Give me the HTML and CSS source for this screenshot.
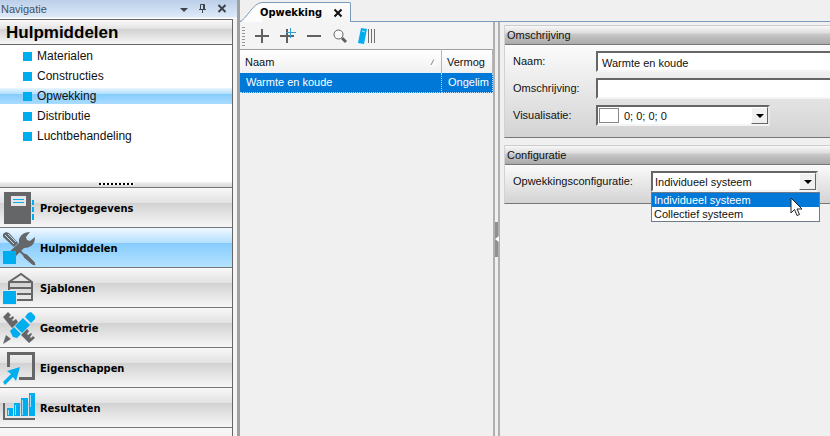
FILE: index.html
```html
<!DOCTYPE html>
<html lang="nl">
<head>
<meta charset="utf-8">
<title>Opwekking</title>
<link rel="stylesheet" href="styles.css">
</head>
<body>
<div class="app">
  <aside class="nav">
    <header class="nav-caption">
      <span class="caption-text">Navigatie</span>
      <button class="cap-btn" aria-label="Menu"><svg width="10" height="10" viewBox="0 0 10 10"><path d="M1 4h8L5 8z" fill="#3c434d"/></svg></button>
      <button class="cap-btn" aria-label="Vastzetten"><svg width="10" height="10" viewBox="0 0 10 10"><path d="M2.500 5.500V.5h4V5.500M1 5.500h7M4.500 5.500V9M5.500 1v4" fill="none" stroke="#3c434d"/></svg></button>
      <button class="cap-btn" aria-label="Sluiten"><svg width="10" height="10" viewBox="0 0 10 10"><path d="M1.500 1l7 7M8.500 1l-7 7" stroke="#3c434d" stroke-width="2"/></svg></button>
    </header>
    <div class="nav-body">
      <h1 class="nav-title">Hulpmiddelen</h1>
      <ul class="nav-list">
        <li><a href="#">Materialen</a></li>
        <li><a href="#">Constructies</a></li>
        <li><a href="#" class="current">Opwekking</a></li>
        <li><a href="#">Distributie</a></li>
        <li><a href="#">Luchtbehandeling</a></li>
      </ul>
      <div class="nav-grip"><i></i></div>
      <div class="sections">
        <button class="section">
          <svg width="36" height="36" viewBox="0 0 36 36"><path d="M4 2h27v32H4z" fill="#646668"/><path d="M11 6h15v10H11z" fill="#e6e6e6"/><path d="M13 9.500h11M13 12.500h11" stroke="#00adef"/><path d="M33 10v5M33 17v5M33 24v6" stroke="#00adef" stroke-width="2"/></svg>
          <span>Projectgegevens</span></button>
        <button class="section active">
          <svg width="36" height="36" viewBox="0 0 36 36"><path d="M3 4l3-2 3 1 9 10-4 4L3 7z" fill="#646668"/><path d="M5 5l9 9M8 4l8 8" stroke="#b9dffa"/><path d="M20 21l5 5" stroke="#646668" stroke-width="2"/><path d="M24 24l3 1 7 7 1 3-3-1-8-7z" fill="#646668" stroke="#646668"/><path d="M30 2l-4 5 1 3 3 1 5-4c0 7-4 11-11 11L13 29l-6-5 12-11C18 7 23 2 30 2z" fill="#646668"/><path d="M3 21h13v13H3z" fill="#00adef"/></svg>
          <span>Hulpmiddelen</span></button>
        <button class="section">
          <svg width="36" height="36" viewBox="0 0 36 36"><path d="M9 31V12l12-8 11 8v18H9M9 12h23M9 18h23M9 24h23" fill="none" stroke="#646668" stroke-width="2"/><path d="M2 20h15v15H2z" fill="#e8e8e8"/><path d="M3 21h13v13H3z" fill="#00adef"/></svg>
          <span>Sjablonen</span></button>
        <button class="section">
          <svg width="36" height="36" viewBox="0 0 36 36"><path d="M3 7l5-5 3 3-2 2 1 1 3-2 1 2-2 2 1 1 3-2 2 3-6 6zM21 25l6-6 2 2-2 3 1 1 3-2 1 1-2 3 1 1 2-2 2 2-6 5z" fill="#646668"/><path d="M25 7l3-4 3-1 4 4v3l-4 4zM15 16l8-8 7 7-8 8zM10 21l4-4 7 7-4 4-4-1z" fill="#00adef"/><path d="M6 25l5 4-8 5z" fill="#646668"/></svg>
          <span>Geometrie</span></button>
        <button class="section">
          <svg width="36" height="36" viewBox="0 0 36 36"><path d="M8.500 17V3.500h25v25H19" fill="none" stroke="#646668" stroke-width="3"/><path d="M20 17l-4 14-3-4-8 8-2-3 8-8-4-3z" fill="#00adef"/></svg>
          <span>Eigenschappen</span></button>
        <button class="section">
          <svg width="36" height="36" viewBox="0 0 36 36"><path d="M4 13v16h31" fill="none" stroke="#646668" stroke-width="2"/><path d="M7 18h6v8H7zM14 13h6v13h-6zM21 8h7v18h-7zM29 3h6v23h-6z" fill="#00adef"/><path d="M8.500 20v5M15.500 15v10M22.500 10v15M30.500 5v12" stroke="#9fdcf7"/></svg>
          <span>Resultaten</span></button>
        <div class="section-rest"></div>
      </div>
    </div>
  </aside>

  <main class="main">
    <div class="tabs">
      <svg class="tab-edge" width="22" height="22" viewBox="0 0 22 22"><path d="M0 22C6 20 13 3 22 3V22z" fill="#fcfcfc"/><path d="M0 21.500C6 20 13 2.500 22 2.500" fill="none" stroke="#7a9bbb"/></svg>
      <div class="tab"><span>Opwekking</span>
        <button aria-label="Tabblad sluiten"><svg width="10" height="10" viewBox="0 0 10 10"><path d="M1.500 1.500l7 7M8.500 1.500l-7 7" stroke="#111" stroke-width="2"/></svg></button>
      </div>
    </div>
    <div class="work">
      <section class="list-pane">
        <div class="toolbar">
          <i class="handle"></i>
          <button aria-label="Toevoegen"><svg width="18" height="18" viewBox="0 0 18 18"><path d="M9 2v14M2 9h14" stroke="#606060" stroke-width="2"/></svg></button>
          <button aria-label="Meerdere toevoegen"><svg width="18" height="18" viewBox="0 0 18 18"><path d="M8 2v14M1 9h14" stroke="#606060" stroke-width="2"/><path d="M11.500 1v10M7 5.500h10" stroke="#2f9fd0"/></svg></button>
          <button aria-label="Verwijderen"><svg width="18" height="18" viewBox="0 0 18 18"><path d="M2 9h14" stroke="#606060" stroke-width="2"/></svg></button>
          <button aria-label="Zoeken"><svg width="18" height="18" viewBox="0 0 18 18"><circle cx="7.500" cy="7.500" r="4.500" fill="#fafafa" stroke="#606060"/><path d="M11 11l4 4" stroke="#606060" stroke-width="3"/></svg></button>
          <button aria-label="Bibliotheek"><svg width="18" height="18" viewBox="0 0 18 18"><path d="M4 1l6 1-3 15-6-1z" fill="#00adef"/><path d="M5 4l3 1" stroke="#b6e7fb"/><path d="M11.500 2v14M14.500 2v14M17.500 2v14" stroke="#707070"/></svg></button>
        </div>
        <table class="grid">
          <thead><tr><th class="col-name"><div>Naam<svg width="6" height="8" viewBox="0 0 6 8"><path d="M1 7l3-6" stroke="#888" fill="none"/><path d="M1 7.500h5L4 1" stroke="#fff" fill="none"/></svg></div></th><th>Vermog</th></tr></thead>
          <tbody><tr><td>Warmte en koude</td><td>Ongelim</td></tr></tbody>
        </table>
      </section>
      <div class="splitter"><i><svg width="4" height="6" viewBox="0 0 4 6"><path d="M4 0v6L0 3z" fill="#fff"/></svg></i></div>
      <section class="detail">
        <fieldset class="group">
          <legend>Omschrijving</legend>
          <div class="fields">
            <label for="naam">Naam:</label>
            <input id="naam" type="text" value="Warmte en koude">
            <label for="oms">Omschrijving:</label>
            <input id="oms" type="text">
            <label for="vis">Visualisatie:</label>
            <div class="combo combo-color"><i class="swatch"></i>
              <select id="vis"><option>0; 0; 0; 0</option></select>
              <span class="arrow"></span></div>
          </div>
        </fieldset>
        <fieldset class="group">
          <legend>Configuratie</legend>
          <div class="fields fields-wide">
            <label for="conf">Opwekkingsconfiguratie:</label>
            <div class="combo combo-conf">
              <select id="conf"><option>Individueel systeem</option><option>Collectief systeem</option></select>
              <span class="arrow"></span>
              <ul class="menu" role="listbox" aria-label="Opwekkingsconfiguratie">
                <li role="option" aria-selected="true">Individueel systeem</li>
                <li role="option" aria-selected="false">Collectief systeem</li>
              </ul>
              <svg class="pointer" width="13" height="20" viewBox="0 0 13 20"><path d="M1 1v15l3.500-3.500L7 18.500l2.500-1L7 12h5z" fill="#fff" stroke="#222"/></svg>
            </div>
          </div>
        </fieldset>
      </section>
    </div>
  </main>
</div>
</body>
</html>
```
FILE: styles.css
```css
* { box-sizing: border-box; }
body {
  margin: 0;
  font: 11px/14px "Liberation Sans", Arial, sans-serif;
  color: #111;
  background: #f0f0f0;
}
button { border: 0; padding: 0; background: none; font: inherit; color: inherit; }
svg { display: block; flex: none; }
ul { list-style: none; margin: 0; padding: 0; }
.app { display: flex; height: 100vh; overflow: hidden; }

/* Navigation */
.nav { flex: 0 0 237px; display: flex; flex-direction: column; background: #f4f4f4; }
.nav-caption {
  display: flex; align-items: center; gap: 9px; height: 19px; padding: 0 10px 2px 1px;
  background: linear-gradient(#bccfe8, #dde9fa 17px, #fff 18px);
  color: #44505f;
}
.caption-text { flex: 1; }
.nav-body {
  flex: 1; min-height: 0; display: flex; flex-direction: column; margin-right: 4px;
  border-top: 1px solid #666; border-right: 1px solid #666; background: #fff;
}
.nav-title {
  margin: 0; height: 25px; padding-left: 6px; border-bottom: 1px solid #666;
  font-size: 17px; line-height: 26px; color: #000;
  background: linear-gradient(#fafafa, #e4e4e4 35%, #d2d2d2 40%, #f6f6f6);
}
.nav-list { flex: 0 0 137px; padding-top: 3px; font-size: 12px; }
.nav-list li { height: 20px; }
.nav-list a {
  display: flex; align-items: center; gap: 5px; height: 16px; padding-left: 23px;
  color: inherit; text-decoration: none;
}
.nav-list a::before { content: ""; width: 9px; height: 9px; background: #00adef; }
.nav-list .current { background: linear-gradient(#eaf6ff, #b4dffe 35%, #86ccfd 40%, #a9dcff); }
.nav-grip { flex: none; height: 5px; background: linear-gradient(#f2f2f2, #d8d8d8); padding-left: 99px; }
.nav-grip i { display: block; margin-top: 1px; width: 35px; height: 2px; background: repeating-linear-gradient(90deg, #000 0 2px, #fff 2px 4px); }
.sections { flex: 1; }
.section {
  display: flex; align-items: center; gap: 4px; width: 100%; height: 40px;
  border-top: 1px solid #777;
  font: bold 11px/16px "DejaVu Sans Condensed", "DejaVu Sans", sans-serif;
  color: #000; text-align: left;
  background: linear-gradient(#f8f8f8, #e2e2e2 38%, #d2d2d2 39%, #f7f7f7);
}
.section span { padding-top: 2px; }
.section.active { background: linear-gradient(#f0f8ff, #b5e0ff 38%, #86ccfd 39%, #b5e2ff); }
.section-rest { height: 40px; border-top: 1px solid #777; background: linear-gradient(#f8f8f8, #e2e2e2); }

/* Workspace */
.main { flex: 1; min-width: 0; display: flex; flex-direction: column; border-left: 3px solid #a0a0a0; }
.tabs { display: flex; flex: none; height: 22px; background: linear-gradient(#f0f0f0 21px, #7a9bbb 21px); }
.tab {
  display: flex; align-items: center; gap: 11px; height: 20px; margin-top: 2px; padding-right: 7px;
  border-top: 1px solid #7a9bbb; border-right: 1px solid #7a9bbb; border-top-right-radius: 2px;
  background: linear-gradient(#fcfcfc, #f4f4f4);
  font: bold 11px/16px "DejaVu Sans Condensed", "DejaVu Sans", sans-serif; color: #000;
}
.tab span { margin-left: -2px; }
.work { flex: 1; min-height: 0; display: flex; }
.list-pane { flex: 0 0 253px; background: #f0f0f0; }
.toolbar { display: flex; align-items: center; gap: 8px; height: 27px; padding: 1px 0 0 2px; background: #f4f4f4; }
.handle { width: 3px; height: 19px; background: repeating-linear-gradient(#999 0 1px, #f4f4f4 1px 3px); }
.grid { width: 100%; border-collapse: separate; border-spacing: 0; table-layout: fixed; }
.grid th {
  height: 24px; padding: 0 5px; border-top: 1px solid #a0a0a0; border-right: 1px solid #b5b5b5;
  text-align: left; font-weight: normal; background: linear-gradient(#fff, #f0f0f0);
}
.grid .col-name { width: 202px; }
.grid th div { display: flex; align-items: center; justify-content: space-between; }
.grid td {
  height: 20px; padding: 0 5px 1px 6px; color: #fff; background: #0078d7;
  border-right: 1px dotted #b8dcf8; border-bottom: 1px dotted #b8dcf8;
}
.splitter {
  flex: 0 0 7px; display: flex; align-items: center;
  border-left: 2px solid #b0b0b0; border-right: 2px solid #b0b0b0; background: #efefef;
}
.splitter i { display: flex; align-items: center; width: 3px; height: 35px; margin-top: 20px; background: #909090; }

/* Details */
.detail { flex: 1; min-width: 0; display: flex; flex-direction: column; gap: 7px; padding: 3px 0 0 4px; }
.group {
  min-width: 0; margin: 0; padding: 0; border: 0; border-left: 1px solid #d2d2d2;
  border-bottom: 1px solid #777; background: linear-gradient(#fff, #fbfbfb 20px, #d3d3d3);
}
.group legend {
  float: left; width: 100%; height: 20px; padding: 0 2px; line-height: 19px;
  border-top: 1px solid #ccc; border-bottom: 1px solid #777;
  background: linear-gradient(#f8f8f8, #dcdcdc 40%, #c8c8c8 45%, #aaa);
}
.fields {
  clear: both; display: grid; grid-template-columns: 83px minmax(0, 1fr);
  align-items: center; row-gap: 6px; padding: 6px 0 11px 8px;
}
.fields-wide { grid-template-columns: 138px minmax(0, 1fr); }
.fields label { height: 16px; }
.fields input, .combo {
  height: 21px; background: #fff; border: 2px solid; border-color: #666 #e8e8e8 #f4f4f4 #666;
}
.fields input { width: 100%; padding: 2px 4px 0; font: inherit; color: inherit; border-right: 0; border-radius: 0; }
.combo { position: relative; display: flex; align-items: center; }
.combo-color { width: 174px; }
.combo-conf { width: 167px; }
.swatch { flex: none; width: 20px; height: 15px; margin-left: 1px; border: 1px solid #888; background: #fff; }
.combo select {
  appearance: none; flex: 1; min-width: 0; border: 0; padding: 0 0 0 2px; height: 16px;
  font: inherit; color: inherit; background: transparent;
}
.combo-color select { padding-left: 5px; }
.arrow {
  flex: none; display: flex; align-items: center; justify-content: center; width: 17px; height: 17px;
  background: #f0f0f0; border: 1px solid; border-color: #fff #666 #666 #fff; pointer-events: none;
}
.arrow::before { content: ""; border: 4px solid transparent; border-top-color: #000; border-bottom: 0; }
.menu {
  position: absolute; z-index: 1; top: 19px; left: -2px; width: 169px;
  border: 1px solid #707a88; background: #fff;
}
.menu li { padding-left: 2px; }
.menu [aria-selected="true"] { color: #fff; background: #0078d7; }
.pointer { position: absolute; z-index: 2; top: 24px; left: 137px; }
```
